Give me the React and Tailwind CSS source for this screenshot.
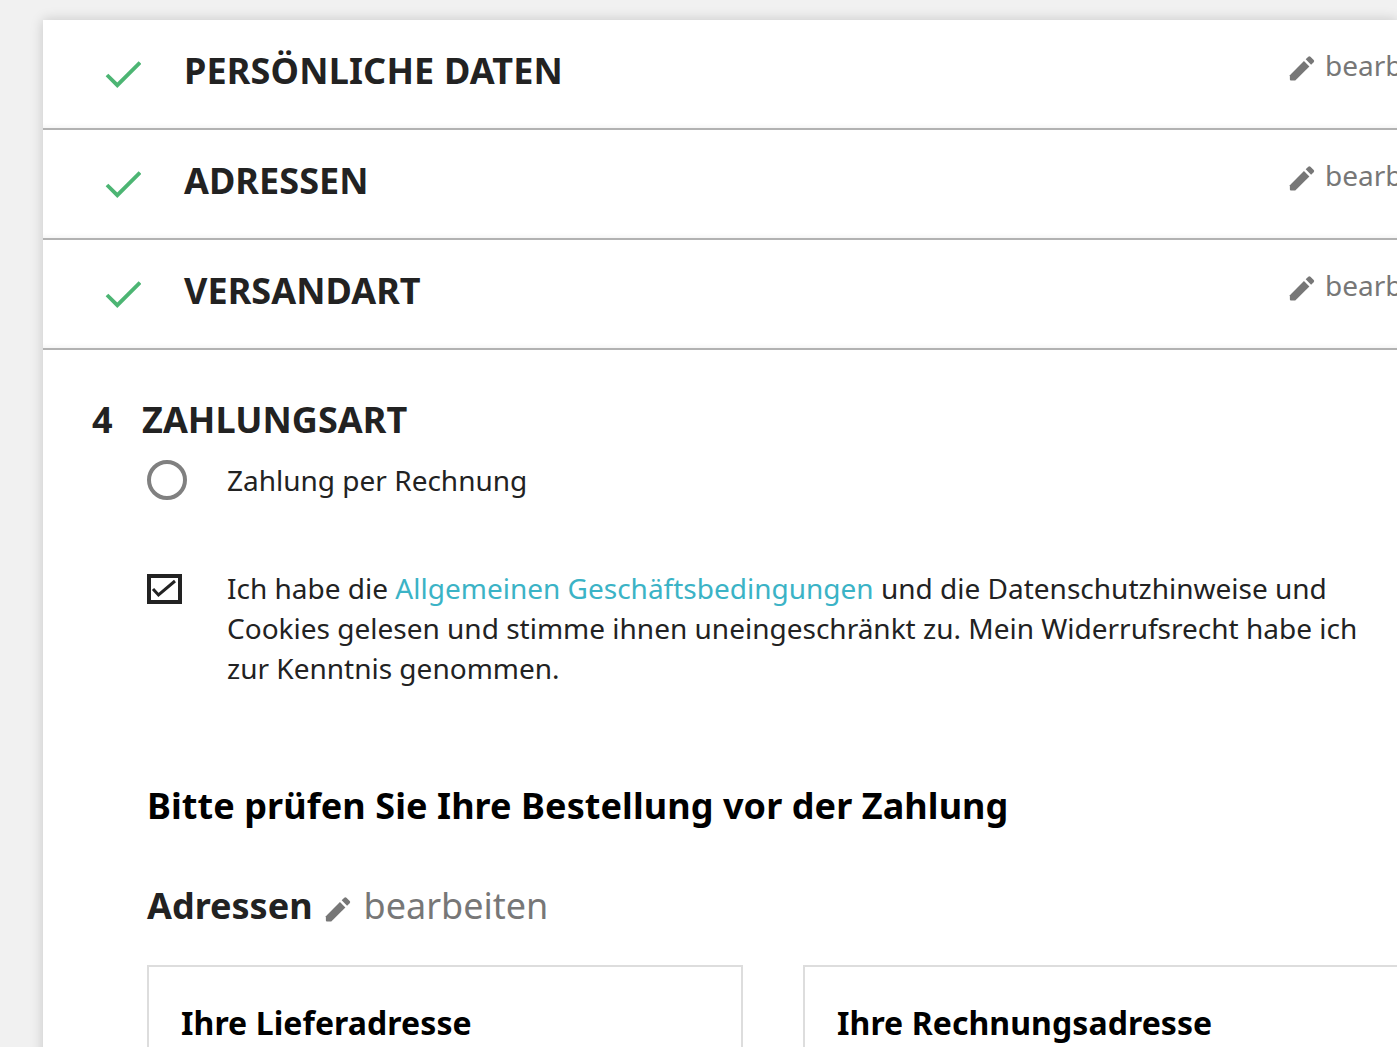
function Pencil({ className }) {
  return (
    <svg viewBox="0 0 24 24" className={className} fill="#777777" aria-hidden="true">
      <path d="M0.8 18.6 L13.8 5.6 L18.8 10.6 L5.8 23.6 L1.8 23.6 Q0.8 23.6 0.8 22.6 Z" />
      <path d="M15.4 4 L17.8 1.6 Q18.8 0.6 19.8 1.6 L22.8 4.6 Q23.8 5.6 22.8 6.6 L20.4 9 Z" />
    </svg>
  );
}

function Check() {
  return (
    <svg viewBox="0 0 36 28" className="h-[28px] w-[36px] shrink-0" fill="none" stroke="#4cb573" strokeWidth="3.8" aria-hidden="true">
      <path d="M2 15 L12.3 25.2 L35 2.5" />
    </svg>
  );
}

function DoneRow({ title, tracking }) {
  return (
    <div className="flex h-[110px] border-b-2 border-[#b2b2b2] pl-[62px] shadow-[inset_0_-6px_6px_-6px_rgba(0,0,0,0.08)]">
      <div className="mt-[40px]"><Check /></div>
      <h2 className={`ml-[43px] mt-[27px] h-[48px] text-[36px] leading-[48px] font-bold text-[#222222] ${tracking}`}>{title}</h2>
      <div className="ml-auto flex w-[108px] shrink-0 items-start overflow-hidden pt-[26px]">
        <Pencil className="mt-[9px] h-[26px] w-[26px] shrink-0" />
        <span className="ml-[10px] text-[28px] leading-[38px] text-[#777777]">bearbeiten</span>
      </div>
    </div>
  );
}

export default function App() {
  return (
    <div className="h-[1047px] w-[1397px] overflow-hidden bg-[#f1f1f1] pt-5 pl-[43px] font-['Noto_Sans',sans-serif] text-[#222222]">
      <div className="h-[1100px] w-[1354px] bg-white shadow-[0_0_12px_rgba(0,0,0,0.18)]">
        <DoneRow title="PERSÖNLICHE DATEN" tracking="tracking-[0.16px]" />
        <DoneRow title="ADRESSEN" tracking="tracking-[0.05px]" />
        <DoneRow title="VERSANDART" tracking="tracking-[0.05px]" />

        <section className="pt-[46px]">
          <div className="flex h-[48px] items-center pl-[49px] text-[36px] leading-[48px] font-bold">
            <span className="w-[50px]">4</span>
            <h2 className="tracking-[0.05px]">ZAHLUNGSART</h2>
          </div>

          <div className="mt-[16px] flex items-center pl-[104px]">
            <span className="h-[40px] w-[40px] shrink-0 rounded-full border-[4px] border-[#808080]" />
            <span className="ml-[40px] text-[28px] leading-[40px]">Zahlung per Rechnung</span>
          </div>

          <div className="mt-[68px] flex items-start pl-[104px]">
            <span className="mt-[6px] flex h-[30px] w-[35px] shrink-0 items-center justify-center border-[4px] border-[#222222]">
              <svg viewBox="0 0 27 22" className="h-[22px] w-[27px]" fill="none" stroke="#222222" strokeWidth="3" aria-hidden="true">
                <path d="M2 11 L7.5 17 L24 3" />
              </svg>
            </span>
            <p className="ml-[45px] w-[1150px] text-[28px] leading-[40px]">
              Ich habe die <span className="text-[#3bb3c6]">Allgemeinen Geschäftsbedingungen</span> und die Datenschutzhinweise und Cookies gelesen und stimme ihnen uneingeschränkt zu. Mein Widerrufsrecht habe ich zur Kenntnis genommen.
            </p>
          </div>

          <h3 className="mt-[94px] pl-[104px] text-[36px] leading-[48px] font-bold tracking-[0.08px] text-black">Bitte prüfen Sie Ihre Bestellung vor der Zahlung</h3>

          <div className="mt-[52px] flex items-center pl-[104px]">
            <span className="text-[36px] leading-[48px] font-bold">Adressen</span>
            <Pencil className="ml-[12px] mt-[5px] h-[26px] w-[26px]" />
            <span className="ml-[13px] text-[36px] leading-[48px] text-[#777777]">bearbeiten</span>
          </div>

          <div className="mt-[35px] flex gap-[60px] pl-[104px]">
            <div className="h-[200px] w-[596px] shrink-0 border-2 border-[#dddddd] pl-[32px] pt-[35px]">
              <h4 className="text-[32px] leading-[42px] font-bold tracking-[0.07px] text-black">Ihre Lieferadresse</h4>
            </div>
            <div className="h-[200px] w-[596px] shrink-0 border-2 border-[#dddddd] pl-[32px] pt-[35px]">
              <h4 className="text-[32px] leading-[42px] font-bold tracking-[0.07px] text-black">Ihre Rechnungsadresse</h4>
            </div>
          </div>
        </section>
      </div>
    </div>
  );
}
